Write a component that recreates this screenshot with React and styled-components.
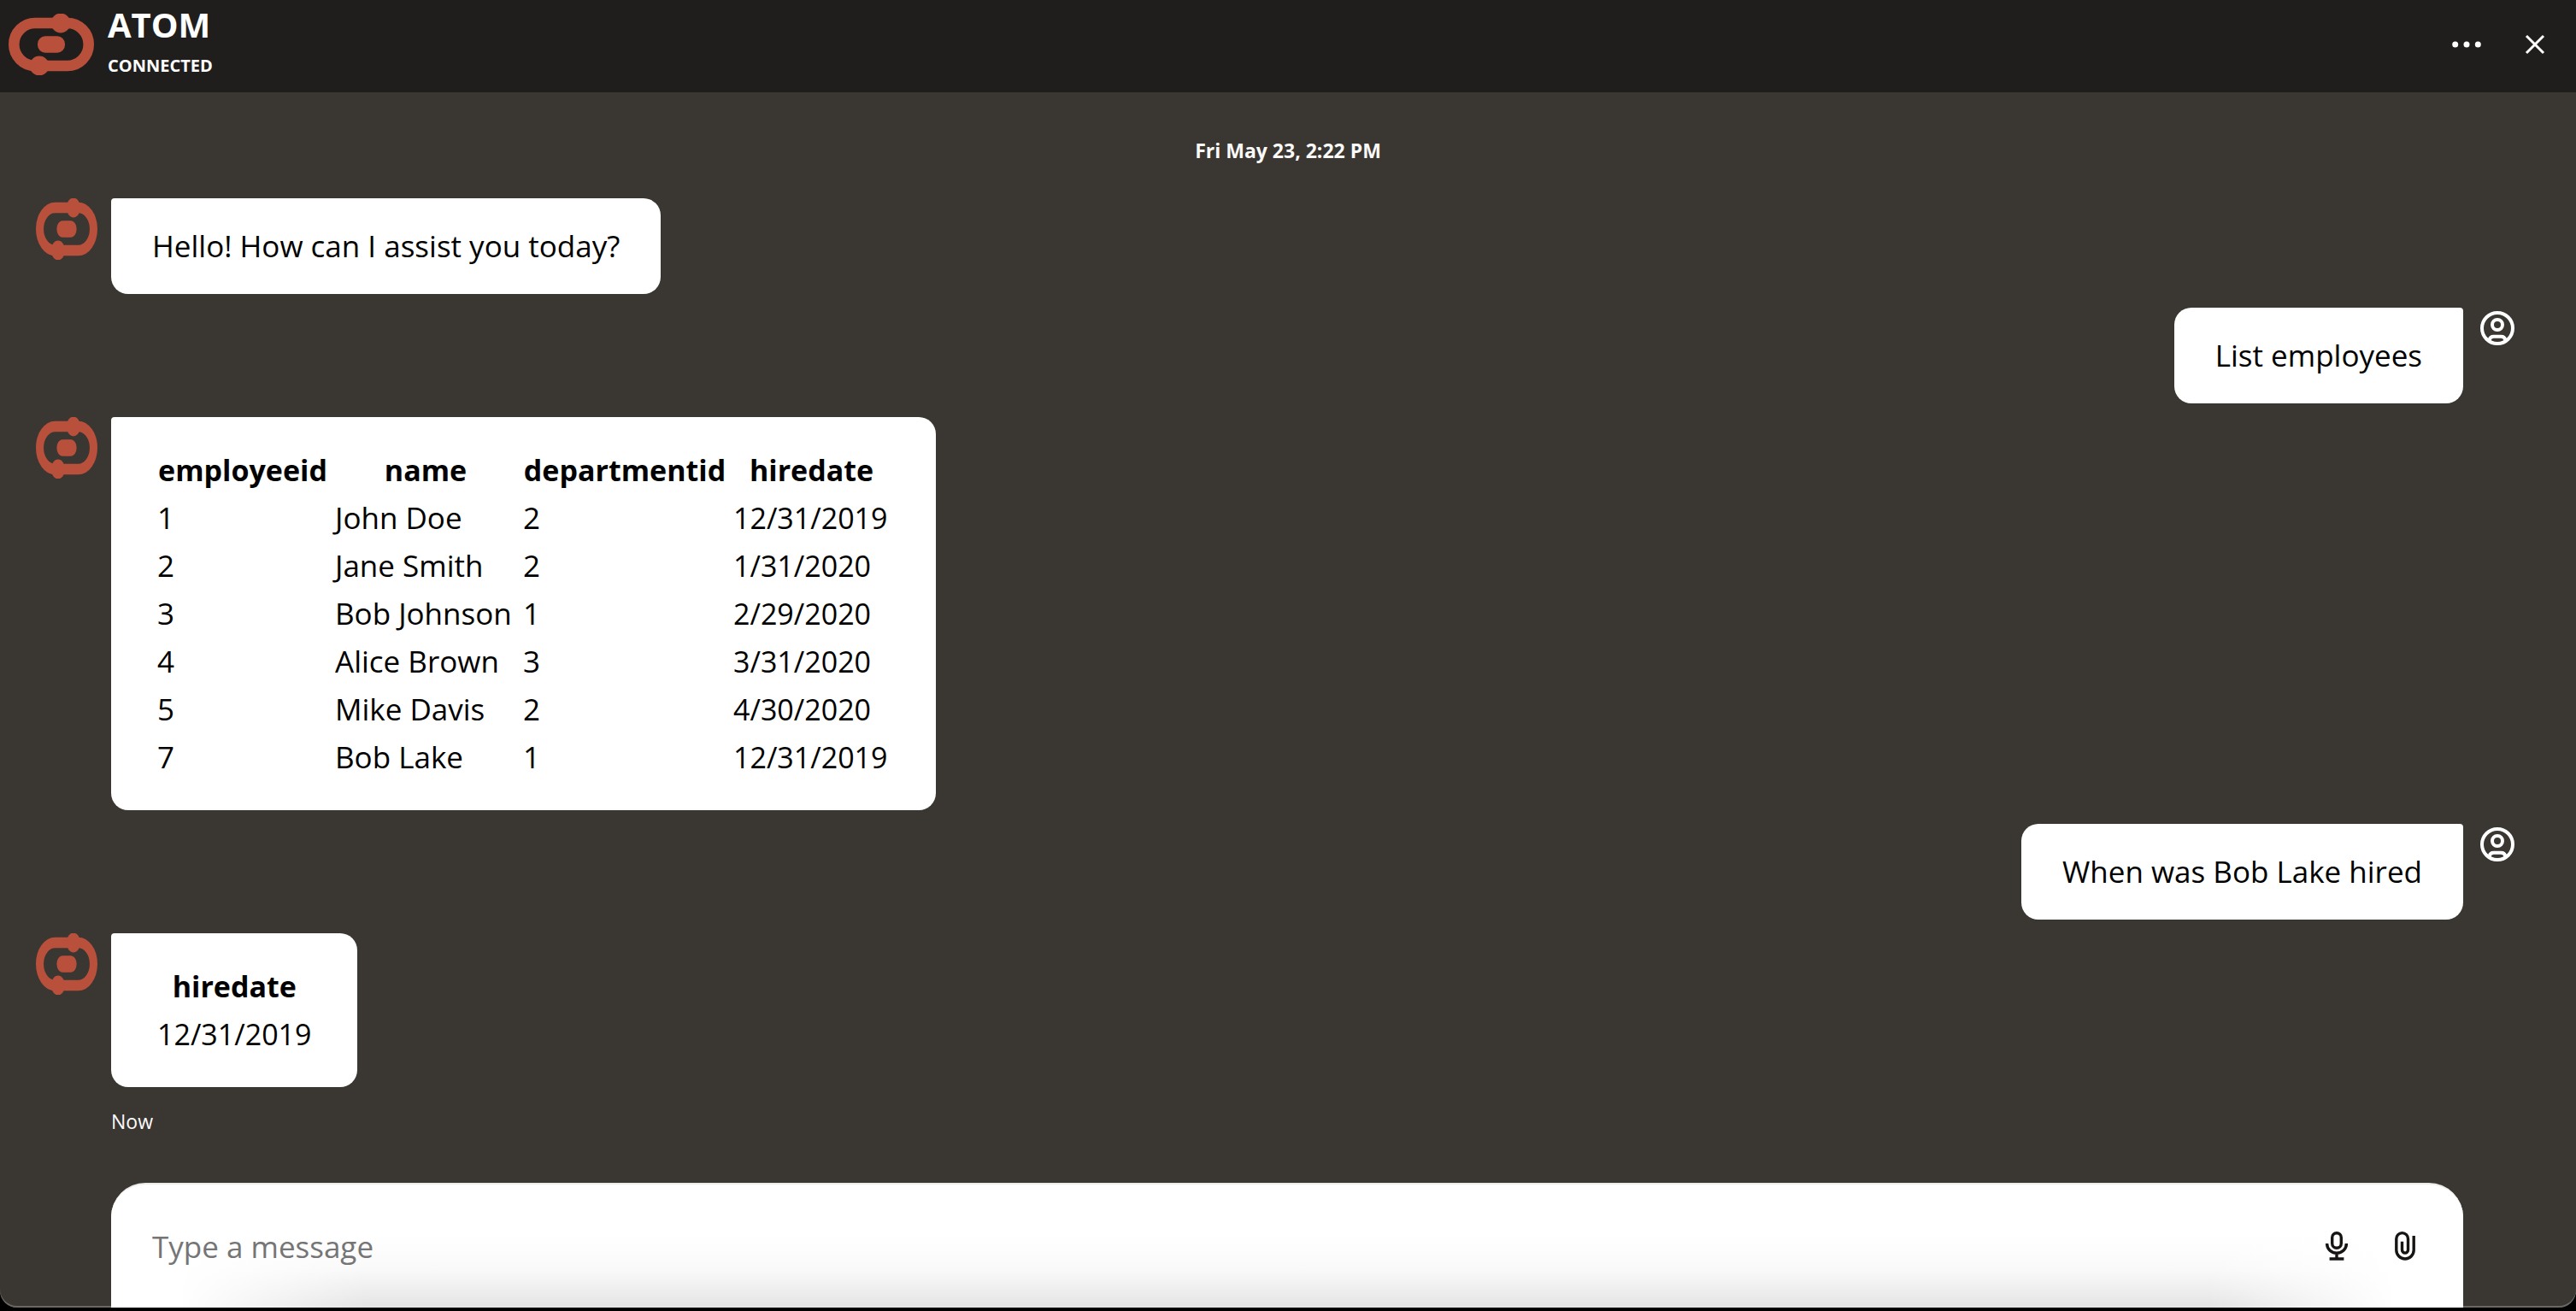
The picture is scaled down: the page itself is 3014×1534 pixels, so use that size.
import React from "react";
import styled, { createGlobalStyle } from "styled-components";

const GlobalStyle = createGlobalStyle`
  *, *::before, *::after { box-sizing: border-box; }
  body {
    margin: 0;
    background: #000;
    font-family: "Open Sans", "Noto Sans", sans-serif;
    font-size: 35px;
    line-height: 48px;
    color: #000;
  }
`;

const Page = styled.div`
  height: 100vh;
  padding-bottom: 4px;
  background: #000;
`;

const Window = styled.div`
  height: 100%;
  display: flex;
  flex-direction: column;
  overflow: hidden;
  background: #3a3631;
  border-radius: 0 0 20px 20px;
  box-shadow: inset 0 -2px 0 #6b6864;
`;

const Header = styled.header`
  flex: none;
  display: flex;
  align-items: flex-start;
  height: 108px;
  padding: 0 8px 0 10px;
  background: #201e1c;
  color: #fff;
`;

const HeaderLogo = styled.div`
  width: 100px;
  height: 72px;
  margin: 16px 16px 0 0;
`;

const Titles = styled.div`
  flex: 1;
`;

const Title = styled.h1`
  margin: 0;
  font-size: 40px;
  line-height: 58px;
  font-weight: 700;
`;

const Status = styled.p`
  margin: 0;
  font-size: 20px;
  line-height: 38px;
  font-weight: 700;
`;

const IconButton = styled.button`
  display: flex;
  align-items: center;
  justify-content: center;
  width: 80px;
  height: ${(p) => (p.$tall ? "104px" : "72px")};
  padding: 0;
  border: 0;
  background: none;
  color: inherit;
  cursor: pointer;
`;

const Conversation = styled.main`
  flex: 1;
  min-height: 0;
  overflow: hidden;
  display: flex;
  flex-direction: column;
  gap: 16px;
  padding: 44px 56px 0 42px;
`;

const DateLine = styled.time`
  margin-right: -14px;
  padding-bottom: 16px;
  text-align: center;
  color: #fcfbfa;
  font-size: 23px;
  font-weight: 700;
`;

const Message = styled.div`
  display: flex;
  align-items: flex-start;
  gap: 16px;
  justify-content: ${(p) => (p.$own ? "flex-end" : "flex-start")};
`;

const Avatar = styled.div`
  flex: none;
  width: ${(p) => (p.$own ? "60px" : "72px")};
  height: ${(p) => (p.$own ? "48px" : "72px")};
  color: #fff;
`;

const Bubble = styled.div`
  padding: 32px 48px;
  background: #fff;
  border-radius: ${(p) => (p.$own ? "20px 4px 20px 20px" : "4px 20px 20px 20px")};
`;

const Table = styled.table`
  border-collapse: separate;
  border-spacing: 4px;
`;

const HeadCell = styled.th`
  min-width: ${(p) => p.$min || 0}px;
  padding: 2px;
  font-size: 34px;
  white-space: nowrap;
`;

const Cell = styled.td`
  padding: 2px;
  font-size: ${(p) => (p.$date ? "34px" : "35px")};
  text-align: left;
  white-space: nowrap;
`;

const Ago = styled.p`
  margin: 0 0 0 88px;
  color: #fcfbfa;
  font-size: 23px;
`;

const Composer = styled.form`
  flex: none;
  display: flex;
  align-items: flex-start;
  height: 146px;
  margin: 0 132px 0 130px;
  padding: 36px 28px 0 48px;
  border-top: 2px solid #eeece9;
  border-radius: 40px 40px 0 0;
  background:
    linear-gradient(to right, #fff 80px, transparent 300px, transparent calc(100% - 300px), #fff calc(100% - 80px)),
    linear-gradient(to bottom, #fff 60px, #f9f9f9 100px, #e4e4e4 144px);
  color: #161513;
`;

const MessageInput = styled.input`
  flex: 1;
  min-width: 0;
  height: 72px;
  padding: 0;
  border: 0;
  outline: 0;
  background: none;
  font: inherit;
  &::placeholder { color: #757575; opacity: 1; }
`;

const Logo = () => (
  <svg width="100%" height="100%" viewBox="0 0 100 72" preserveAspectRatio="none" fill="#b8503c" aria-hidden="true">
    <rect x="6.3" y="11" width="87.4" height="50" rx="25" fill="none" stroke="#b8503c" strokeWidth="12.6" />
    <circle cx="61" cy="11" r="11.4" />
    <circle cx="36" cy="61" r="11.4" />
    <rect x="34" y="26.3" width="32" height="19.4" rx="9" />
  </svg>
);

const MoreIcon = () => (
  <svg width="48" height="48" viewBox="0 0 48 48" fill="currentColor" aria-hidden="true">
    <circle cx="10.7" cy="24" r="3.5" />
    <circle cx="24" cy="24" r="3.5" />
    <circle cx="37.3" cy="24" r="3.5" />
  </svg>
);

const CloseIcon = () => (
  <svg width="48" height="48" viewBox="0 0 48 48" stroke="currentColor" strokeWidth="3" aria-hidden="true">
    <path d="M14 14L34 34M34 14L14 34" />
  </svg>
);

const UserIcon = () => (
  <svg width="48" height="48" viewBox="0 0 48 48" fill="none" stroke="currentColor" strokeWidth="4" aria-hidden="true">
    <circle cx="24" cy="24" r="18" />
    <circle cx="24" cy="20" r="6" />
    <path d="M14.5 38C15.2 35 17.4 33.8 19.6 33.8H28.4C30.6 33.8 32.8 35 33.5 38" />
  </svg>
);

const MicIcon = () => (
  <svg width="48" height="48" viewBox="0 0 48 48" fill="none" stroke="currentColor" strokeWidth="3.4" aria-hidden="true">
    <rect x="18.7" y="8.7" width="10.6" height="17.6" rx="5.3" />
    <path d="M12.6 21C12.6 27.5 17.5 32.2 24 32.2S35.4 27.5 35.4 21M24 32V38M15.6 39H32.4" />
  </svg>
);

const ClipIcon = () => (
  <svg width="48" height="48" viewBox="0 0 48 48" fill="none" stroke="currentColor" strokeWidth="3.4" aria-hidden="true">
    <path d="M34.2 12V28.8A10.2 10.2 0 0 1 13.8 28.8V15.5A6.85 6.85 0 0 1 27.5 15.5V28.6A3.5 3.5 0 0 1 20.5 28.6V18.7" />
  </svg>
);

function BotMessage({ children }) {
  return (
    <Message>
      <Avatar><Logo /></Avatar>
      <Bubble>{children}</Bubble>
    </Message>
  );
}

function UserMessage({ children }) {
  return (
    <Message $own>
      <Bubble $own>{children}</Bubble>
      <Avatar $own><UserIcon /></Avatar>
    </Message>
  );
}

function ResultTable({ columns, rows }) {
  return (
    <Table>
      <thead>
        <tr>
          {columns.map((c) => (
            <HeadCell key={c.name} scope="col" $min={c.min}>{c.name}</HeadCell>
          ))}
        </tr>
      </thead>
      <tbody>
        {rows.map((row) => (
          <tr key={row[0]}>
            {row.map((cell, i) => (
              <Cell key={columns[i].name} $date={columns[i].name === "hiredate"}>{cell}</Cell>
            ))}
          </tr>
        ))}
      </tbody>
    </Table>
  );
}

const employeeColumns = [
  { name: "employeeid", min: 204 },
  { name: "name", min: 216 },
  { name: "departmentid", min: 242 },
  { name: "hiredate", min: 187 },
];

const employees = [
  ["1", "John Doe", "2", "12/31/2019"],
  ["2", "Jane Smith", "2", "1/31/2020"],
  ["3", "Bob Johnson", "1", "2/29/2020"],
  ["4", "Alice Brown", "3", "3/31/2020"],
  ["5", "Mike Davis", "2", "4/30/2020"],
  ["7", "Bob Lake", "1", "12/31/2019"],
];

export default function App() {
  return (
    <Page>
      <GlobalStyle />
      <Window>
        <Header>
          <HeaderLogo><Logo /></HeaderLogo>
          <Titles>
            <Title>ATOM</Title>
            <Status>CONNECTED</Status>
          </Titles>
          <IconButton $tall type="button" aria-label="More options"><MoreIcon /></IconButton>
          <IconButton $tall type="button" aria-label="Close"><CloseIcon /></IconButton>
        </Header>
        <Conversation>
          <DateLine>Fri May 23, 2:22 PM</DateLine>
          <BotMessage>Hello! How can I assist you today?</BotMessage>
          <UserMessage>List employees</UserMessage>
          <BotMessage>
            <ResultTable columns={employeeColumns} rows={employees} />
          </BotMessage>
          <UserMessage>When was Bob Lake hired</UserMessage>
          <BotMessage>
            <ResultTable columns={[{ name: "hiredate" }]} rows={[["12/31/2019"]]} />
          </BotMessage>
          <Ago>Now</Ago>
        </Conversation>
        <Composer onSubmit={(e) => e.preventDefault()}>
          <MessageInput type="text" placeholder="Type a message" aria-label="Type a message" />
          <IconButton type="button" aria-label="Speak a message"><MicIcon /></IconButton>
          <IconButton type="button" aria-label="Attach a file"><ClipIcon /></IconButton>
        </Composer>
      </Window>
    </Page>
  );
}
